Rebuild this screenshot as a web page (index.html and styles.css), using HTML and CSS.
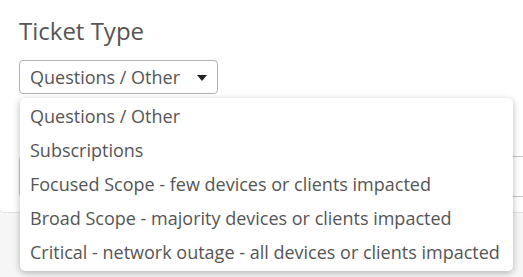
FILE: index.html
```html
<!DOCTYPE html>
<html>
<head>
<meta charset="utf-8">
<link rel="stylesheet" href="styles.css">
</head>
<body>
<div class="card">
  <div class="label">Ticket Type</div>
  <div class="select-wrap">
    <div class="select">
      <span>Questions / Other</span>
      <span class="caret"></span>
    </div>
    <ul class="menu">
      <li>Questions / Other</li>
      <li>Subscriptions</li>
      <li>Focused Scope - few devices or clients impacted</li>
      <li>Broad Scope - majority devices or clients impacted</li>
      <li>Critical - network outage - all devices or clients impacted</li>
    </ul>
  </div>
  <div class="field"></div>
</div>
</body>
</html>
```

FILE: styles.css
```css
html, body {
  margin: 0;
  padding: 0;
  height: 277px;
  overflow: hidden;
  background: #f6f6f6;
  font-family: "Open Sans", "Liberation Sans", sans-serif;
  color: #555;
}
.card {
  background: #fff;
  height: 213px;
  margin-left: -1px;
  border: 1px solid #e2e2e2;
  border-top: none;
  border-right: none;
  border-radius: 0 0 0 5px;
  padding: 15px 0 0 19px;
  box-sizing: border-box;
}
.label {
  font-size: 24px;
  line-height: 32px;
  color: #555;
  margin-bottom: 13px;
}
.select-wrap {
  position: relative;
}
.select {
  width: 199px;
  height: 34px;
  box-sizing: border-box;
  border: 1px solid #b3b3b3;
  border-radius: 4px;
  display: flex;
  align-items: center;
  justify-content: space-between;
  padding: 0 10px 0 10px;
  font-size: 18px;
  color: #555;
}
.caret {
  width: 0;
  height: 0;
  border-left: 5px solid transparent;
  border-right: 5px solid transparent;
  border-top: 6px solid #222;
  margin-top: 1px;
}
.menu {
  position: absolute;
  top: 38px;
  left: 1px;
  width: 493px;
  margin: 0;
  padding: 1px 0 2px;
  list-style: none;
  background: #fff;
  border-radius: 5px;
  box-shadow: 0 2px 7px rgba(0, 0, 0, 0.28);
  z-index: 2;
}
.menu li {
  font-size: 18px;
  line-height: 24px;
  padding: 5px 10px;
  color: #555;
  white-space: nowrap;
}
.field {
  margin-top: 62px;
  height: 39px;
  border: 1px solid #c8c8c8;
  border-right: none;
  border-radius: 4px 0 0 4px;
}
```
